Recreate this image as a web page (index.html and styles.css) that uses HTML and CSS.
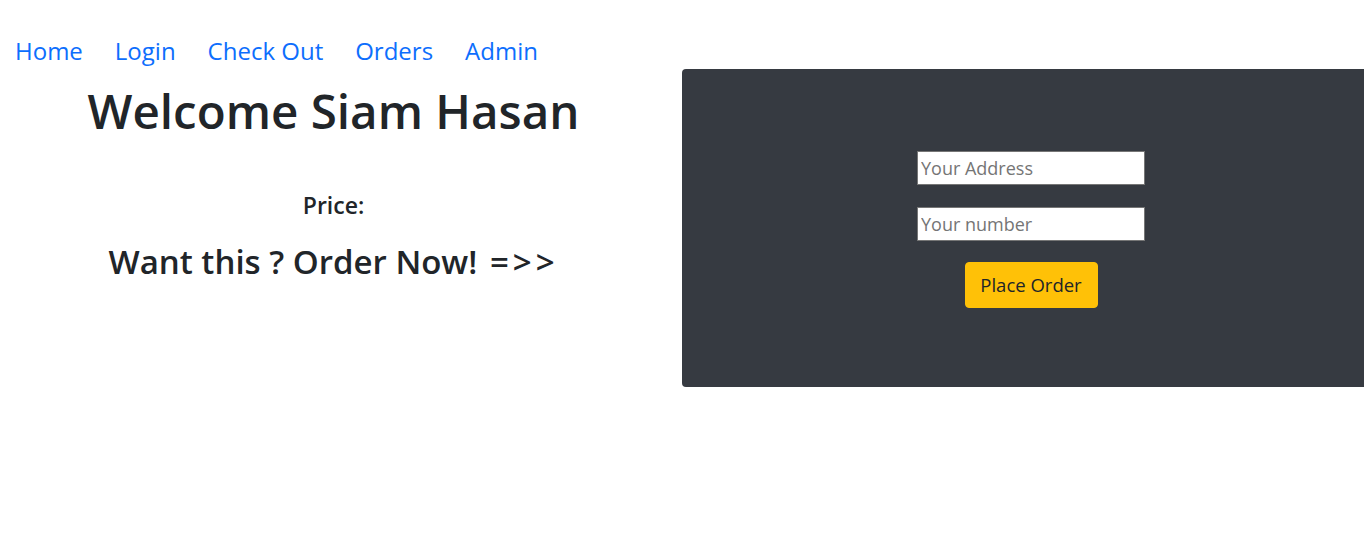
FILE: index.html
```html
<!DOCTYPE html>
<html lang="en">
<head>
<meta charset="utf-8">
<title>Check Out</title>
<link rel="stylesheet" href="styles.css">
</head>
<body>
<nav class="nav">
  <a class="nav-link" href="#">Home</a>
  <a class="nav-link" href="#">Login</a>
  <a class="nav-link" href="#">Check Out</a>
  <a class="nav-link" href="#">Orders</a>
  <a class="nav-link" href="#">Admin</a>
</nav>
<div class="row">
  <div class="col-left">
    <h1 class="welcome">Welcome Siam Hasan</h1>
    <p class="price">Price:</p>
    <h2 class="cta">Want this ? Order Now! <span class="arrow">=&gt;&gt;</span></h2>
  </div>
  <div class="col-right">
    <form class="order-form">
      <input class="field" type="text" placeholder="Your Address">
      <input class="field" type="text" placeholder="Your number">
      <button class="btn-order" type="button">Place Order</button>
    </form>
  </div>
</div>
</body>
</html>
```

FILE: styles.css
```css
html, body {
  margin: 0;
  padding: 0;
  overflow-x: hidden;
  background: #fff;
}
body {
  font-family: "Open Sans", "Noto Sans", sans-serif;
  color: #212529;
  width: 1364px;
}
.nav {
  display: flex;
  padding: 33px 0 0 0;
  height: 36px;
  align-items: center;
}
.nav-link {
  color: #0d6efd;
  text-decoration: none;
  font-size: 24px;
  line-height: 36px;
  padding: 0 15px;
}
.nav-link + .nav-link {
  margin-left: 2px;
}
.row {
  display: flex;
  width: 1380px;
}
.col-left {
  width: 667px;
  padding-right: 15px;
  text-align: center;
}
.welcome {
  margin: 13px 0 0 0;
  font-size: 47.5px;
  font-weight: 600;
  line-height: 57px;
}
.price {
  margin: 51px 0 0 0;
  font-size: 23px;
  font-weight: 600;
  line-height: 30px;
}
.cta {
  margin: 19px 0 0 0;
  font-size: 33px;
  font-weight: 600;
  line-height: 46px;
}
.arrow {
  letter-spacing: 4px;
  margin-left: 4px;
}
.col-right {
  width: 698px;
  height: 318px;
  background: #363a41;
  border-radius: 4px 0 0 4px;
  display: flex;
  align-items: center;
  justify-content: center;
}
.order-form {
  display: flex;
  flex-direction: column;
  align-items: center;
  padding-top: 2px;
}
.field {
  width: 228px;
  height: 34px;
  box-sizing: border-box;
  border: 1px solid #767676;
  border-radius: 0;
  padding: 0 3px;
  font-family: inherit;
  font-size: 18px;
  color: #212529;
  background: #fff;
  margin-bottom: 22px;
}
.field::placeholder {
  color: #757575;
}
.btn-order {
  width: 133px;
  height: 46px;
  margin-top: -1px;
  background: #ffc107;
  border: 1px solid #ffc107;
  border-radius: 4px;
  font-family: inherit;
  font-size: 18.5px;
  color: #212529;
  padding: 0;
}
```
